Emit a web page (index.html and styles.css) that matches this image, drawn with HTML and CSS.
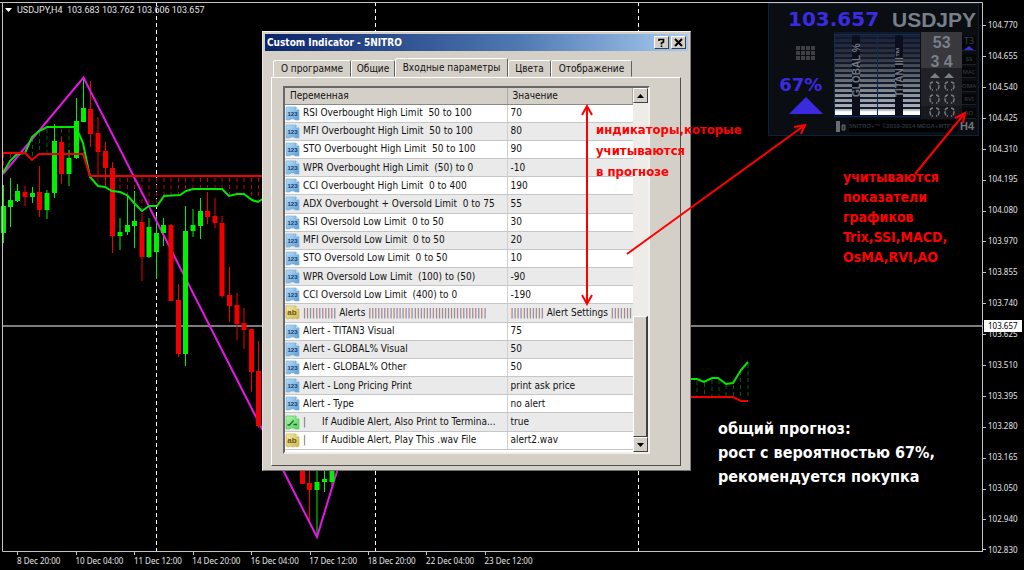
FILE: index.html
```html
<!DOCTYPE html>
<html lang="ru">
<head>
<meta charset="utf-8">
<title>USDJPY,H4</title>
<link rel="stylesheet" href="styles.css">
</head>
<body>
<svg class="defs" aria-hidden="true">
  <defs>
    <linearGradient id="blue" x1="0" y1="0" x2="1" y2="1"><stop offset="0" stop-color="#b4dcf8"/><stop offset="1" stop-color="#5f9fd4"/></linearGradient>
    <linearGradient id="gold" x1="0" y1="0" x2="1" y2="1"><stop offset="0" stop-color="#f6eba8"/><stop offset="1" stop-color="#cdb650"/></linearGradient>
    <linearGradient id="lime" x1="0" y1="0" x2="1" y2="1"><stop offset="0" stop-color="#b0f5b0"/><stop offset="1" stop-color="#55cf5c"/></linearGradient>
    <symbol id="num" viewBox="0 0 15 15"><path d="M1 1H11L14 4V14H10L9 13H6L5 14H1Z" fill="url(#blue)" stroke="#7fb2dc" stroke-width=".7"/><path d="M11 1V4H14" fill="#e4f4ff" stroke="#6aa3d2" stroke-width=".6"/><text x="7.500" y="10" text-anchor="middle" class="glyph glyph-num">123</text></symbol>
    <symbol id="str" viewBox="0 0 15 15"><path d="M1 1H11L14 4V13L12 14L10 13L8 14L5 13L3 14L1 13Z" fill="url(#gold)" stroke="#c9b45a" stroke-width=".7"/><path d="M11 1V4H14" fill="#fffbd8" stroke="#bfa94c" stroke-width=".6"/><text x="7" y="10" text-anchor="middle" class="glyph glyph-str">ab</text></symbol>
    <symbol id="bool" viewBox="0 0 15 15"><path d="M1 1H11L14 4V14H10L9 13H6L5 14H1Z" fill="url(#lime)" stroke="#5fc465" stroke-width=".7"/><path d="M11 1V4H14" fill="#e2ffe2" stroke="#58bd5e" stroke-width=".6"/><path d="M2.500 10H4.500L8.500 5.500M8.500 9.500H12" fill="none" stroke="#1d6a24" stroke-width="1.300"/></symbol>
  </defs>
</svg>

<main class="terminal">
  <svg class="chart" width="1024" height="570" aria-label="USDJPY H4">
    <path class="current" d="M3 326H982"/>
    <path class="separator" d="M156.500 2V552M375.500 2V552M638.500 2V552"/>
    <path class="cloud-up" d="M32.500 138V158M39.500 132V153M47 129V153M54.500 129V153M61.500 129V153M69 129V153M76.500 129V153M83.500 145V153"/>
    <path class="cloud-up" d="M697 381V396M704.500 383V396M712 380V396M719 380V396M726 385V396M733.500 385V396M740.500 371V399M748 364V399"/>
    <path class="cloud-down" d="M3.500 154V172M10.500 154V161M98 178V186M105.500 178V187M112.500 178V190M120 178V192M127.500 178V195M134.500 178V203M142 178V209M149 178V206M156.500 178V206M164 178V196M171 178V195M178.500 178V195M185.500 178V191M193 178V189M200.500 178V189M207.500 178V189M215 178V189M222 178V189M229.500 178V195M237 178V194M244 178V194M251.500 178V200M258.500 178V200"/>
    <path class="wick bull" d="M3.500 185V243M10.500 178V227M17.500 184V202M32.500 187V203M47 190V219M54.500 124V198M69 150V186M76.500 98V159M83.500 78V122M120 218V250M127.500 195V235M134.500 191V248M149 218V258M156.500 216V279M163.500 218V246M185.500 206V366M193 209V237M200.500 198V239M317 465V537M324.500 465V492M332 465V486"/>
    <path class="wick bear" d="M25 186V206M39.500 166V217M61.500 137V184M90.500 81V147M98 117V175M105.500 142V187M112.500 162V253M142 213V281M171 224V301M178.500 284V357M207.500 192V224M215 198V228M222 216V298M229.500 267V322M237 293V340M244 308V349M251.500 329V392M258.500 341V428M309.500 465V522"/>
    <path class="zigzag" d="M3 174L83.500 77.500L317 537L338 468"/>
    <path class="body bull" d="M3.500 206V233M10.500 200V207M17.500 191V201M32.500 193V197M47 193V210M54.500 141V193M69 158V174M76.500 121V158M83.500 108V122M120 232V236M127.500 225V232M134.500 221V226M149 227V257M156.500 233V252M163.500 225V233M185.500 231V354M193 225V231M200.500 211V226M317 482V490M324.500 479V482M332 465V482"/>
    <path class="body bear" d="M25 192V197M39.500 192V210M61.500 142V174M90.500 109V134M98 133V152M105.500 151V168M112.500 168V236M142 222V257M171 225V301M178.500 300V354M207.500 211V217M215 216V223M222 223V296M229.500 295V306M237 305V324M244 323V330M251.500 329V372M258.500 371V426M302.500 465V484M309.500 483V490"/>
    <path class="line line-green" d="M3 173L10 161L17 154L25 153L32 137L39 131L47 127H76L83 143L90 177L98 186L105 187L112 191L120 192L127 195L135 204L142 211L149 206H157L164 196L180 195L186 191L193 189H222L229 196L237 194H244L252 200L258 202L264 198"/>
    <path class="line line-red" d="M3 153H25L32 160L39 154H83L90 176H264"/>
    <path class="line line-green" d="M688 379H697L704 382L712 378H718L726 384L733 383L741 370L748 362"/>
    <path class="line line-red" d="M688 397H733L741 401H748"/>
    <path class="frame" d="M0 2.500H982.500V552M2.500 2V551.500H983"/>
    <path class="frame" d="M983 25.500H986M983 56.500H986M983 87.500H986M983 118.500H986M983 149.500H986M983 180.500H986M983 211.500H986M983 241.500H986M983 272.500H986M983 303.500H986M983 334.500H986M983 365.500H986M983 396.500H986M983 427.500H986M983 458.500H986M983 489.500H986M983 519.500H986M983 549.500H986"/>
    <path class="frame" d="M17.500 552V555M76.500 552V555M134.500 552V555M193.500 552V555M251.500 552V555M310.500 552V555M368.500 552V555M426.500 552V555M485.500 552V555"/>
    <path d="M5 8H12L8.500 12Z" fill="#fff"/>
  </svg>

  <header class="quote">USDJPY,H4&nbsp; 103.683 103.762 103.606 103.657</header>
  <div class="prices">
    <span>104.770</span><span>104.655</span><span>104.540</span><span>104.425</span><span>104.310</span><span>104.195</span><span>104.080</span><span>103.970</span><span>103.855</span><span>103.740</span><span>103.625</span><span>103.510</span><span>103.395</span><span>103.280</span><span>103.165</span><span>103.050</span><span>102.940</span><span>102.830</span>
  </div>
  <span class="price-tag">103.657</span>
  <footer class="times">
    <span>8 Dec 20:00</span><span>10 Dec 04:00</span><span>11 Dec 12:00</span><span>14 Dec 20:00</span><span>16 Dec 04:00</span><span>17 Dec 12:00</span><span>18 Dec 20:00</span><span>22 Dec 04:00</span><span>23 Dec 12:00</span>
  </footer>

  <section class="nitro" aria-label="5NITRO">
    <div class="nitro-head"><strong class="nitro-price">103.657</strong><strong class="nitro-symbol">USDJPY</strong></div>
    <div class="nitro-body">
      <div class="nitro-signal">
        <svg width="19" height="15"><path d="M0 2H19M0 7H19M0 12H19" stroke="#3e3e45" stroke-width="4" stroke-dasharray="4 1"/></svg>
        <strong class="percent">67%</strong>
        <svg width="36" height="18"><path d="M18 1L35 18H1Z" fill="#3b2be0"/></svg>
      </div>
      <svg class="meters" width="87" height="87">
        <defs>
          <linearGradient id="meter" x1="0" y1="0" x2="0" y2="1"><stop offset="0" stop-color="#1b1f38"/><stop offset=".3" stop-color="#33363f"/><stop offset=".6" stop-color="#6e737b"/><stop offset=".94" stop-color="#b4b7bc"/><stop offset=".96" stop-color="#fff"/></linearGradient>
          <pattern id="slats" width="5" height="5" patternUnits="userSpaceOnUse"><path d="M0 1H5" stroke="#101a2c" stroke-width="2"/></pattern>
        </defs>
        <path d="M0 0H87V86H0Z" fill="#08162a"/>
        <path d="M1 2H18V83H1ZM26 2H43V83H26ZM44 2H61V83H44ZM69 2H86V83H69Z" fill="url(#meter)"/>
        <path d="M0 0H87V79H0Z" fill="url(#slats)"/>
        <path d="M0 2.500H87M43.500 2V84M.500 2V84M86.500 2V84M0 84.500H87" stroke="#0c2d50" fill="none"/>
        <path d="M18 4H26V84H18ZM61 4H69V84H61Z" fill="#0d0e1c"/>
        <text class="meter-label" transform="translate(26 65) rotate(-90)">GLOBAL %</text>
        <text class="meter-label" transform="translate(69 65) rotate(-90)">TITAN III™</text>
      </svg>
      <div class="nitro-scores">
        <strong>53</strong>
        <strong>3 4</strong>
        <svg width="24" height="5"><path d="M0 5L5 0L10 5ZM14 5L19 0L24 5Z" fill="#7b8087"/></svg>
        <svg width="26" height="36"><path id="rings" d="M4 1Q1 1 1 5T4 9M7 1Q10 1 10 5T7 9M19 1Q16 1 16 5T19 9M22 1Q25 1 25 5T22 9" fill="none" stroke="#777c82" stroke-width="1.500" stroke-dasharray="4 1"/><use href="#rings" y="13"/><use href="#rings" y="26"/></svg>
      </div>
      <div class="nitro-modes">
        <span class="mode mode-active">T3<svg width="10" height="4"><path d="M0 4L5 0L10 4Z" fill="#3b2be0"/></svg></span><span class="mode">SS</span><span class="mode">MAC</span><span class="mode">OMA</span><span class="mode">RVI</span><span class="mode">AO</span>
      </div>
    </div>
    <div class="nitro-foot"><svg width="10" height="11"><path d="M0 0H4V11H0Z" fill="#696e75"/><path d="M6 4H9V9H6Z" fill="#34373c" stroke="#666"/></svg><span>5NITRO+™ ©2010-2014 MEGA+MTFX</span><strong>H4</strong></div>
  </section>

  <section class="dialog" role="dialog" aria-labelledby="dialog-title">
    <div class="titlebar">
      <h1 class="title" id="dialog-title">Custom Indicator - 5NITRO</h1>
      <button class="caption" type="button" aria-label="Help"><svg width="9" height="9"><path d="M2 3V1.500H6.500V4L4.500 5V6.500M4.500 7.500V9" fill="none" stroke="#000" stroke-width="1.600"/></svg></button>
      <button class="caption" type="button" aria-label="Close"><svg width="9" height="9"><path d="M1 1L8 8M8 1L1 8" stroke="#000" stroke-width="2"/></svg></button>
    </div>
    <div class="tabs" role="tablist">
      <button class="tab tab-about" type="button" role="tab">О программе</button>
      <button class="tab tab-common" type="button" role="tab">Общие</button>
      <button class="tab tab-inputs" type="button" role="tab" aria-selected="true">Входные параметры</button>
      <button class="tab tab-colors" type="button" role="tab">Цвета</button>
      <button class="tab tab-display" type="button" role="tab">Отображение</button>
    </div>
    <div class="page">
      <div class="listview">
        <table class="params">
          <thead><tr><th>Переменная</th><th>Значение</th></tr></thead>
          <tbody>
            <tr><td><svg class="icon"><use href="#num"/></svg>RSI Overbought High Limit &nbsp;50 to 100</td><td>70</td></tr>
            <tr><td><svg class="icon"><use href="#num"/></svg>MFI Overbought High Limit &nbsp;50 to 100</td><td>80</td></tr>
            <tr><td><svg class="icon"><use href="#num"/></svg>STO Overbought High Limit &nbsp;50 to 100</td><td>90</td></tr>
            <tr><td><svg class="icon"><use href="#num"/></svg>WPR Overbought High Limit &nbsp;(50) to 0</td><td>-10</td></tr>
            <tr><td><svg class="icon"><use href="#num"/></svg>CCI Overbought High Limit &nbsp;0 to 400</td><td>190</td></tr>
            <tr><td><svg class="icon"><use href="#num"/></svg>ADX Overbought + Oversold Limit &nbsp;0 to 75</td><td>55</td></tr>
            <tr><td><svg class="icon"><use href="#num"/></svg>RSI Oversold Low Limit &nbsp;0 to 50</td><td>30</td></tr>
            <tr><td><svg class="icon"><use href="#num"/></svg>MFI Oversold Low Limit &nbsp;0 to 50</td><td>20</td></tr>
            <tr><td><svg class="icon"><use href="#num"/></svg>STO Oversold Low Limit &nbsp;0 to 50</td><td>10</td></tr>
            <tr><td><svg class="icon"><use href="#num"/></svg>WPR Oversold Low Limit &nbsp;(100) to (50)</td><td>-90</td></tr>
            <tr><td><svg class="icon"><use href="#num"/></svg>CCI Oversold Low Limit &nbsp;(400) to 0</td><td>-190</td></tr>
            <tr><td><svg class="icon"><use href="#str"/></svg><span class="bars">|||||||||||</span> Alerts <span class="bars">|||||||||||||||||||||||||||||||||||||||</span></td><td><span class="bars">|||||||||||</span> Alert Settings <span class="bars">|||||||</span></td></tr>
            <tr><td><svg class="icon"><use href="#num"/></svg>Alert - TITAN3 Visual</td><td>75</td></tr>
            <tr><td><svg class="icon"><use href="#num"/></svg>Alert - GLOBAL% Visual</td><td>50</td></tr>
            <tr><td><svg class="icon"><use href="#num"/></svg>Alert - GLOBAL% Other</td><td>50</td></tr>
            <tr><td><svg class="icon"><use href="#num"/></svg>Alert - Long Pricing Print</td><td>print ask price</td></tr>
            <tr><td><svg class="icon"><use href="#num"/></svg>Alert - Type</td><td>no alert</td></tr>
            <tr><td><svg class="icon"><use href="#bool"/></svg><span class="nest">|</span>If Audible Alert, Also Print to Termina...</td><td>true</td></tr>
            <tr><td><svg class="icon"><use href="#str"/></svg><span class="nest">|</span>If Audible Alert, Play This .wav File</td><td>alert2.wav</td></tr>
          </tbody>
        </table>
        <div class="scrollbar">
          <button class="scroll-button" type="button" aria-label="Scroll up"><svg width="7" height="4"><path d="M0 4L3.500 0L7 4Z"/></svg></button>
          <div class="thumb"></div>
          <button class="scroll-button" type="button" aria-label="Scroll down"><svg width="7" height="4"><path d="M0 0L3.500 4L7 0Z"/></svg></button>
        </div>
      </div>
    </div>
  </section>

  <p class="note note-indicators">индикаторы,которые<br>учитываются<br>в прогнозе</p>
  <p class="note note-series">учитываются<br>показатели<br>графиков<br>Trix,SSI,MACD,<br>OsMA,RVI,AO</p>
  <p class="note note-forecast">общий прогноз:<br>рост с вероятностью 67%,<br>рекомендуется покупка</p>
  <svg class="arrows" width="1024" height="570" aria-hidden="true">
    <path d="M587 107V303M582 115L587 106L592 115M582 295L587 304L592 295"/>
    <path d="M627 254L805 125M794 127L805 125L801 134"/>
    <path d="M915 174L965 113M955 118L965 113L963 123"/>
  </svg>
</main>
</body>
</html>
```
FILE: styles.css
```css
* { box-sizing: border-box; }
body { margin: 0; background: #000; font-family: "DejaVu Sans Condensed", Tahoma, sans-serif; }
button { font: inherit; color: inherit; padding: 0; }
.defs { position: absolute; width: 0; height: 0; }

.terminal { position: relative; min-height: 100vh; overflow: hidden; background: #000; color: #e4e4e4; font: 8px/12px "Noto Sans", Tahoma, sans-serif; }
.chart, .arrows { position: absolute; left: 0; top: 0; fill: none; }
.current { stroke: #7c7c7c; stroke-width: 2; }
.separator { stroke: #fff; stroke-dasharray: 4 3; }
.cloud-up { stroke: #006000; stroke-dasharray: 4 3; }
.cloud-down { stroke: #c00000; stroke-dasharray: 4 3; }
.wick { stroke-width: 1; }
.body { stroke-width: 5; }
.bull { stroke: #00f000; }
.bear { stroke: #f00000; }
.zigzag { stroke: #e815e8; stroke-width: 2; }
.line { stroke-width: 2; }
.line-green { stroke: #00e800; }
.line-red { stroke: #f00000; }
.frame { stroke: #c4c4c4; }

.quote { position: absolute; left: 17px; top: 4px; font: 9px/12px Roboto, Tahoma, sans-serif; }
.prices { position: absolute; left: 988px; top: 19px; height: 537px; display: flex; flex-direction: column; justify-content: space-between; }
.price-tag { position: absolute; left: 984px; top: 320px; padding: 0 4px; background: #fff; color: #000; }
.times { position: absolute; left: 17px; top: 555px; width: 526px; display: grid; grid-template-columns: repeat(9, 1fr); white-space: nowrap; }

.nitro { position: absolute; left: 768px; top: 3px; width: 211px; padding: 3px 2px; background: #0a0d12; border: 1px solid #0c2138; color: #777f88; }
.nitro-head { display: flex; justify-content: space-between; padding-left: 17px; line-height: 25px; }
.nitro-price { color: #3b2be0; font: bold 20px/25px "DejaVu Sans", sans-serif; }
.nitro-symbol { font: bold 21px/25px "Liberation Sans", Arial, sans-serif; }
.nitro-body { display: flex; }
.nitro-signal { width: 63px; display: flex; flex-direction: column; align-items: center; padding: 14px 0 0 7px; }
.percent { margin: 13px 10px 0 0; color: #3b2be0; font: bold 18px/22px "DejaVu Sans", sans-serif; }
.meters { margin-right: 1px; }
.meter-label { fill: #747b84; font: bold 10px "Liberation Sans", Arial, sans-serif; }
.nitro-scores { width: 41px; height: 87px; display: flex; flex-direction: column; align-items: center; gap: 3px; padding-top: 3px; background: linear-gradient(#38383d 36px, #202126 36px, #202126 74px, #18191e 74px); font: bold 16px/16px "Liberation Sans", Arial, sans-serif; }
.nitro-modes { flex: 1; display: flex; flex-direction: column; justify-content: space-between; gap: 2px; padding-top: 4px; }
.mode { background: #050608; color: #3a404a; border-bottom: 1px solid #1c2027; text-align: center; font-size: 6px; line-height: 10px; }
.mode-active { display: flex; flex-direction: column; align-items: center; font-size: 9px; }

.nitro-foot { display: flex; align-items: center; gap: 3px; padding: 1px 2px 0 65px; color: #2c3440; font: bold 6px/12px "Liberation Sans", Arial, sans-serif; white-space: nowrap; }
.nitro-foot span { flex: 1; background: #000; }
.nitro-foot strong { color: #707780; font-size: 11px; }

.dialog { position: absolute; left: 262px; top: 31px; width: 429px; padding: 2px; background: #d4d0c8; border: 1px solid; border-color: #f4f2ee #808080 #707070 #e8e6e0; color: #111; font: 10px/14px "DejaVu Sans Condensed", Tahoma, sans-serif; }
.titlebar { display: flex; align-items: center; height: 17px; padding: 0 2px; background: linear-gradient(90deg, #0a246a, #5079b2 60%, #a6caf0); color: #fff; }
.title { flex: 1; margin: 0; font: bold 10px/17px "DejaVu Sans Condensed", Tahoma, sans-serif; }
.caption { width: 15px; height: 13px; margin-left: 2px; display: grid; place-items: center; background: #d4d0c8; border: 1px solid; border-color: #fff #404040 #404040 #fff; }
.tabs { display: flex; align-items: flex-end; height: 26px; padding: 0 8px; }
.tab { height: 17px; background: #d4d0c8; border: 1px solid; border-color: #fff #606060 transparent #fff; border-radius: 2px 2px 0 0; white-space: nowrap; }
.tab-about { width: 78px; }
.tab-common { width: 44px; }
.tab-inputs { width: 113px; height: 19px; }
.tab-colors { width: 43px; }
.tab-display { width: 81px; }
.page { margin: 0 7px 2px 6px; padding: 8px 30px 11px 11px; border: 1px solid; border-color: #fff #505050 #505050 #fff; }
.listview { display: flex; height: 368px; background: #fff; border: 2px solid; border-color: #686868 #f2f0ec #f2f0ec #686868; }
.params { flex: 1; width: 100%; height: 362px; border-collapse: collapse; table-layout: fixed; }
.params th { width: 222px; height: 16px; padding: 0 5px; background: #d4d0c8; border-right: 1px solid #aaa; border-bottom: 1px solid #888; text-align: left; font-weight: normal; line-height: 14px; }
.params th + th { width: auto; }
.params td { padding: 0 0 0 3px; border-bottom: 1px solid #c6c6c6; border-right: 1px solid #d0d0d0; line-height: 16px; white-space: nowrap; overflow: hidden; }
.params td + td { border-right: 0; }
.params td:first-child { padding-left: 0; }
.params tbody tr:nth-child(even) { background: #eaeaea; }
.icon { width: 15px; height: 15px; margin-right: 3px; vertical-align: middle; }
.bars, .nest { color: #75505a; }
.nest { display: inline-block; width: 19px; }
.glyph { font-family: "Liberation Sans", Arial, sans-serif; font-weight: bold; }
.glyph-num { font-size: 6px; fill: #153c6c; }
.glyph-str { font-size: 8px; fill: #6b5512; }
.scrollbar { width: 15px; flex: none; display: flex; flex-direction: column; background: #eeece8; }
.scroll-button { height: 15px; display: grid; place-items: center; background: #d4d0c8; border: 1px solid; border-color: #fff #404040 #404040 #fff; }
.thumb { height: 121px; margin-top: auto; background: #d4d0c8; border: 1px solid; border-color: #fff #404040 #404040 #fff; border-right-width: 2px; }

.note { position: absolute; margin: 0; color: #f00; font: bold 13px/21px "Comic Sans MS", "DejaVu Sans Condensed", sans-serif; white-space: nowrap; }
.note-indicators { left: 596px; top: 119px; }
.note-series { left: 843px; top: 167px; font-size: 14px; line-height: 20px; }
.note-forecast { left: 718px; top: 417px; color: #fff; font-size: 16px; line-height: 24px; }
.arrows { stroke: #f00; stroke-width: 2; pointer-events: none; }
```
